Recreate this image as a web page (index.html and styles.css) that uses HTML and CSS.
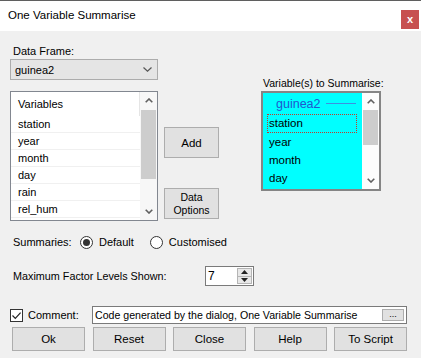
FILE: index.html
```html
<!DOCTYPE html>
<html lang="en">
<head>
    <meta charset="UTF-8">
    <title>One Variable Summarise</title>
    <link rel="stylesheet" href="styles.css">
</head>
<body>
    <div class="dialog">
        <div class="titlebar">
            <span class="title">One Variable Summarise</span>
            <span class="close">x</span>
        </div>

        <div class="content">
            <div class="top">
                <div class="col-left">
                    <div class="label">Data Frame:</div>
                    <div class="combo">
                        <span>guinea2</span>
                        <svg width="9" height="5" viewBox="0 0 9 5"><path d="M0.5 0.5 L4.5 4.2 L8.5 0.5" fill="none" stroke="#555" stroke-width="1.2"/></svg>
                    </div>
                    <div class="listview">
                        <div class="lv-items">
                            <div class="lv-header"><span>Variables</span></div>
                            <div class="lv-row">station</div>
                            <div class="lv-row">year</div>
                            <div class="lv-row">month</div>
                            <div class="lv-row">day</div>
                            <div class="lv-row">rain</div>
                            <div class="lv-row">rel_hum</div>
                        </div>
                        <div class="scrollbar">
                            <div class="sb-arrow">
                                <svg width="8" height="5" viewBox="0 0 8 5"><path d="M0.7 4.3 L4 1 L7.3 4.3" fill="none" stroke="#606060" stroke-width="1.6"/></svg>
                            </div>
                            <div class="sb-track"><div class="sb-thumb thumb-left"></div></div>
                            <div class="sb-arrow">
                                <svg width="8" height="5" viewBox="0 0 8 5"><path d="M0.7 0.7 L4 4 L7.3 0.7" fill="none" stroke="#606060" stroke-width="1.6"/></svg>
                            </div>
                        </div>
                    </div>
                </div>

                <div class="col-mid">
                    <div class="btn btn-add">Add</div>
                    <div class="btn btn-options">Data<br>Options</div>
                </div>

                <div class="col-right">
                    <div class="label">Variable(s) to Summarise:</div>
                    <div class="receiver">
                        <div class="rc-items">
                            <div class="rc-group"><span>guinea2</span><i class="rc-line"></i></div>
                            <div class="rc-row focused">station</div>
                            <div class="rc-row">year</div>
                            <div class="rc-row">month</div>
                            <div class="rc-row">day</div>
                        </div>
                        <div class="scrollbar light">
                            <div class="sb-arrow">
                                <svg width="8" height="5" viewBox="0 0 8 5"><path d="M0.7 4.3 L4 1 L7.3 4.3" fill="none" stroke="#606060" stroke-width="1.6"/></svg>
                            </div>
                            <div class="sb-track"><div class="sb-thumb thumb-right"></div></div>
                            <div class="sb-arrow">
                                <svg width="8" height="5" viewBox="0 0 8 5"><path d="M0.7 0.7 L4 4 L7.3 0.7" fill="none" stroke="#606060" stroke-width="1.6"/></svg>
                            </div>
                        </div>
                    </div>
                </div>
            </div>

            <div class="row summaries">
                <span class="row-label sum-label">Summaries:</span>
                <span class="radio checked"></span>
                <span class="radio-text">Default</span>
                <span class="radio second"></span>
                <span class="radio-text">Customised</span>
            </div>

            <div class="row factor">
                <span class="row-label factor-label">Maximum Factor Levels Shown:</span>
                <div class="spin">
                    <span class="spin-value">7</span>
                    <div class="spin-buttons">
                        <div class="spin-btn"><svg width="7" height="4" viewBox="0 0 7 4"><path d="M0 4 L3.5 0 L7 4 Z" fill="#222"/></svg></div>
                        <div class="spin-btn"><svg width="7" height="4" viewBox="0 0 7 4"><path d="M0 0 L3.5 4 L7 0 Z" fill="#222"/></svg></div>
                    </div>
                </div>
            </div>

            <div class="row comment">
                <span class="checkbox">
                    <svg width="11" height="11" viewBox="0 0 11 11"><path d="M1.5 5.5 L4.3 8.3 L9.6 2.6" fill="none" stroke="#222" stroke-width="1.2"/></svg>
                </span>
                <span class="comment-label">Comment:</span>
                <div class="comment-box">
                    <span>Code generated by the dialog, One Variable Summarise</span>
                    <span class="dots">...</span>
                </div>
            </div>

            <div class="buttons">
                <div class="btn">Ok</div>
                <div class="btn">Reset</div>
                <div class="btn">Close</div>
                <div class="btn">Help</div>
                <div class="btn">To Script</div>
            </div>
        </div>
    </div>
</body>
</html>
```

FILE: styles.css
```css
body {
    margin: 0;
    font-family: "Liberation Sans", Arial, sans-serif;
    font-size: 11px;
    color: #000;
    background: #f0f0f0;
}
.dialog {
    width: 421px;
    height: 358px;
    background: #f0f0f0;
    overflow: hidden;
}
.titlebar {
    height: 30px;
    background: #fff;
    border-top: 1px solid #5f5f5f;
    display: flex;
    align-items: center;
    justify-content: space-between;
    padding: 0 2px 0 8px;
}
.title {
    font-size: 11.5px;
    margin-top: -3px;
}
.close {
    width: 18px;
    height: 19px;
    margin-top: 6px;
    background: #c75050;
    color: #fff;
    font-weight: bold;
    font-size: 11px;
    display: flex;
    align-items: center;
    justify-content: center;
}
.content {
    padding: 0 10px;
}
.top {
    display: flex;
    height: 190px;
}
.label {
    height: 16px;
    line-height: 16px;
    padding-left: 3px;
    white-space: nowrap;
}
.col-left {
    width: 148px;
    padding-top: 12px;
}
.combo {
    height: 21px;
    box-sizing: border-box;
    border: 1px solid #acacac;
    background: #e5e5e5;
    display: flex;
    align-items: center;
    justify-content: space-between;
    padding: 0 5px 0 4px;
}
.listview {
    margin-top: 11px;
    height: 130px;
    box-sizing: border-box;
    border: 1px solid #828790;
    background: #fff;
    display: flex;
}
.lv-items {
    flex: 1;
    padding-left: 7px;
}
.lv-header {
    height: 24px;
    line-height: 24px;
    border-right: 1px solid #e5e5e5;
}
.lv-row {
    height: 16px;
    line-height: 17px;
    border-bottom: 1px solid #f0f0f0;
    margin-left: -7px;
    padding-left: 7px;
}
.scrollbar {
    width: 17px;
    background: #f7f7f7;
    display: flex;
    flex-direction: column;
}
.sb-arrow {
    height: 17px;
    display: flex;
    align-items: center;
    justify-content: center;
}
.sb-track {
    flex: 1;
}
.sb-thumb {
    margin: 1px 1px 0;
    background: #cdcdcd;
}
.thumb-left {
    height: 69px;
}
.thumb-right {
    height: 35px;
    margin-top: 0;
}
.col-mid {
    width: 55px;
    margin-left: 6px;
    padding-top: 96px;
}
.btn {
    box-sizing: border-box;
    border: 1px solid #adadad;
    background: #e1e1e1;
    display: flex;
    align-items: center;
    justify-content: center;
    text-align: center;
}
.btn-add {
    height: 31px;
    font-size: 11.5px;
}
.btn-options {
    height: 31px;
    margin-top: 30px;
    line-height: 13px;
    font-size: 10.5px;
}
.col-right {
    width: 120px;
    margin-left: 42px;
    padding-top: 44px;
}
.col-right .label {
    padding-left: 2px;
    font-size: 10.5px;
}
.receiver {
    height: 100px;
    box-sizing: border-box;
    border: 2px solid #858585;
    background: #00ffff;
    display: flex;
}
.rc-items {
    flex: 1;
    padding-left: 4px;
}
.rc-group {
    height: 21px;
    display: flex;
    align-items: center;
    color: #2156cf;
    font-size: 12.5px;
    padding-left: 9px;
}
.rc-line {
    width: 30px;
    height: 1px;
    background: #3d8fe0;
    margin-left: 5px;
}
.rc-row {
    height: 18px;
    line-height: 18px;
    padding-left: 2px;
    font-size: 11.5px;
}
.rc-row.focused {
    height: 19px;
    line-height: 17px;
    box-sizing: border-box;
    border: 1px dotted #c0392b;
    padding-left: 1px;
    margin-right: 5px;
}
.scrollbar.light {
    background: #fcfcfc;
}
.row {
    display: flex;
    align-items: center;
}
.row-label {
    padding-left: 3px;
    box-sizing: border-box;
}
.summaries {
    height: 16px;
    margin-top: 13px;
}
.sum-label {
    width: 70px;
}
.radio {
    width: 13px;
    height: 13px;
    box-sizing: border-box;
    border: 1px solid #333;
    border-radius: 50%;
    background: #fff;
    display: flex;
    align-items: center;
    justify-content: center;
}
.radio.checked::after {
    content: "";
    width: 7px;
    height: 7px;
    border-radius: 50%;
    background: #333;
}
.radio.second {
    margin-left: 16px;
}
.radio-text {
    margin-left: 6px;
}
.factor {
    height: 20px;
    margin-top: 16px;
}
.factor-label {
    width: 195px;
    font-size: 10.8px;
}
.spin {
    width: 49px;
    height: 20px;
    box-sizing: border-box;
    border: 1px solid #7a7a7a;
    background: #fff;
    display: flex;
    justify-content: space-between;
}
.spin-value {
    padding-left: 2px;
    line-height: 18px;
    font-size: 12px;
}
.spin-buttons {
    width: 15px;
    display: flex;
    flex-direction: column;
    margin: 1px 1px 1px 0;
}
.spin-btn {
    flex: 1;
    background: #e8e8e8;
    border: 1px solid #b5b5b5;
    display: flex;
    align-items: center;
    justify-content: center;
}
.spin-btn + .spin-btn {
    border-top: none;
}
.comment {
    height: 18px;
    margin-top: 20px;
}
.checkbox {
    width: 13px;
    height: 13px;
    box-sizing: border-box;
    border: 1px solid #333;
    background: #fff;
    display: flex;
    align-items: center;
    justify-content: center;
}
.comment-label {
    margin-left: 5px;
    width: 64px;
}
.comment-box {
    width: 315px;
    height: 18px;
    box-sizing: border-box;
    border: 1px solid #7a7a7a;
    background: #fff;
    display: flex;
    align-items: center;
    justify-content: space-between;
    padding: 0 2px 0 2px;
    font-size: 10.6px;
}
.dots {
    width: 22px;
    height: 12px;
    box-sizing: border-box;
    border: 1px solid #adadad;
    background: #e1e1e1;
    font-size: 9px;
    line-height: 9px;
    text-align: center;
}
.buttons {
    display: flex;
    justify-content: space-between;
    margin: 3px 4px 0 2px;
}
.buttons .btn {
    width: 73px;
    height: 24px;
    font-size: 11.5px;
}
```
